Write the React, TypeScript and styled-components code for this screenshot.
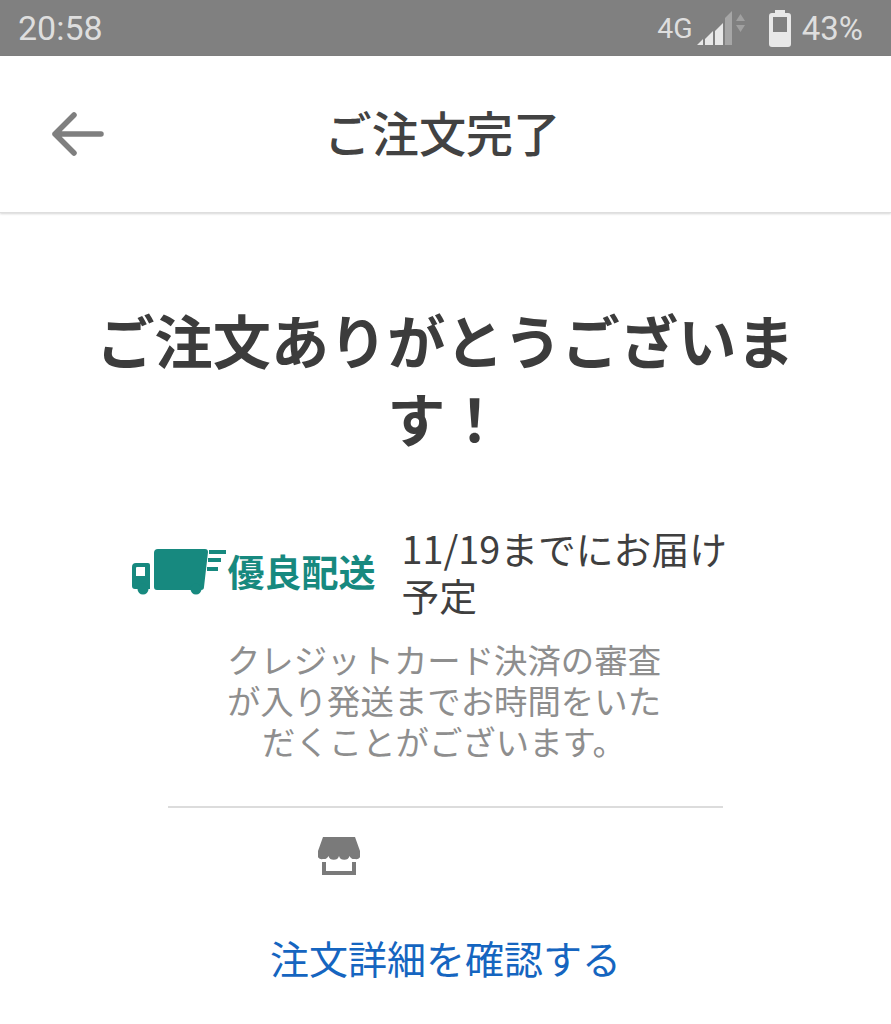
import styled, { createGlobalStyle } from 'styled-components';

const GlobalStyle = createGlobalStyle`
  html, body {
    margin: 0;
    padding: 0;
    background: #fff;
  }
  body {
    font-family: Roboto, "Noto Sans CJK JP", sans-serif;
    -webkit-font-smoothing: antialiased;
  }
`;

const JP = `"Noto Sans CJK JP", sans-serif`;

const Page = styled.div`
  width: 891px;
  height: 1024px;
  overflow: hidden;
  background: #fff;
`;

const StatusBar = styled.div`
  height: 56px;
  background: #808080;
  color: #dedede;
  display: flex;
  align-items: center;
  justify-content: space-between;
  padding: 0 28px 0 18px;
  box-sizing: border-box;
`;

const Clock = styled.span`
  font-size: 34px;
  font-weight: 400;
`;

const StatusRight = styled.div`
  display: flex;
  align-items: center;
`;

const NetworkLabel = styled.span`
  font-size: 28.5px;
  margin-right: 4px;
`;

const BatteryWrap = styled.span`
  display: flex;
  margin-left: 22px;
`;

const BatteryLabel = styled.span`
  margin-left: 11px;
  font-size: 33px;
`;

const Header = styled.header`
  height: 157px;
  box-sizing: border-box;
  display: flex;
  align-items: center;
  position: relative;
  justify-content: center;
  border-bottom: 1px solid #dedede;
  box-shadow: 0 1px 2px rgba(0, 0, 0, 0.16);
`;

const BackButton = styled.button`
  position: absolute;
  left: 50px;
  top: 50px;
  width: 56px;
  height: 56px;
  padding: 0;
  border: 0;
  background: none;
`;

const Title = styled.h1`
  margin: 0 6px 4px 0;
  font: 500 47.200px/60px ${JP};
  color: #424242;
`;

const Main = styled.main`
  display: flex;
  flex-direction: column;
  align-items: center;
`;

const Thanks = styled.h2`
  width: 700px;
  margin: 87px 0 0;
  text-align: center;
  font: 700 58.2px/78px ${JP};
  color: #3c3c3c;
`;

const DeliveryRow = styled.div`
  margin-top: 68px;
  width: 630px;
  display: flex;
  align-items: center;
`;

const Badge = styled.div`
  display: flex;
  align-items: center;
  flex: none;
  margin-right: 26px;
`;

const BadgeText = styled.span`
  font: 700 37px/48px ${JP};
  color: #17897f;
  margin-left: 1px;
`;

const DeliveryDate = styled.p`
  margin: 0;
  width: 345px;
  font: 400 37.800px/47px ${JP};
  color: #3f3f3f;
`;

const Notice = styled.p`
  width: 440px;
  margin: 20px 3px 0 0;
  text-align: center;
  font: 400 33.4px/41px ${JP};
  color: #8e8e8e;
`;

const Divider = styled.hr`
  width: 555px;
  height: 2px;
  margin: 45px 0 0;
  border: 0;
  background: #dcdcdc;
`;

const StoreRow = styled.div`
  width: 555px;
  margin-top: 29px;
  padding-left: 150px;
  box-sizing: border-box;
  line-height: 0;
`;

const DetailLink = styled.a`
  margin-top: 52px;
  font: 400 39px/56px ${JP};
  color: #1565c0;
  text-decoration: none;
`;

const SignalIcon = () => (
  <svg width="50" height="36" viewBox="0 0 50 36">
    <path d="M0 35h6v-6zM8 35h8V21l-8 8zM18 35h8V13l-8 8z" fill="#e8e8e8" />
    <path d="M28 35h7V1l-7 7z" fill="#a6a6a6" />
    <path d="M39 11l4.500-7 4.500 7zM39 15h9l-4.500 7z" fill="#a0a0a0" />
  </svg>
);

const BatteryIcon = () => (
  <svg width="22" height="37" viewBox="0 0 22 37">
    <path
      fillRule="evenodd"
      d="M6 0h10v3h3a3 3 0 0 1 3 3v28a3 3 0 0 1-3 3H3a3 3 0 0 1-3-3V6a3 3 0 0 1 3-3h3zM4 7v15h14V7z"
      fill="#e8e8e8"
    />
  </svg>
);

const BackIcon = () => (
  <svg width="56" height="56" viewBox="0 0 56 56" fill="none" stroke="#7f7f7f" strokeWidth="5.500" strokeLinecap="round" strokeLinejoin="round">
    <path d="M5 28h46M24 9L5 28l19 19" />
  </svg>
);

const TruckIcon = () => (
  <svg width="96" height="48" viewBox="0 0 96 48" fill="#17897f">
    <path d="M5 16h12a2 2 0 0 1 2 2v24H4a3 3 0 0 1-3-3V20a4 4 0 0 1 4-4zm1 4a1 1 0 0 0-1 1v8h9v-9z" fillRule="evenodd" />
    <circle cx="12" cy="42" r="5.500" />
    <path d="M27 2h47a3 3 0 0 1 3 3l-4 35a3 3 0 0 1-3 3H26a3 3 0 0 1-3-3V6a4 4 0 0 1 4-4z" />
    <circle cx="65" cy="42" r="5.500" />
    <path d="M78 3h17v4H78zM77 11h13v4H77zM76 20h11v4H76z" />
  </svg>
);

const StoreIcon = () => (
  <svg width="42" height="40" viewBox="0 0 42 40" fill="#7a7a7a">
    <path d="M5 0h32l5 14a5 5 0 0 1-5 8 5.200 5.200 0 0 1-5.500-3 5.500 5.500 0 0 1-10.500 0 5.500 5.500 0 0 1-10.500 0A5.200 5.200 0 0 1 5 22a5 5 0 0 1-5-8z" />
    <path d="M4 25h4v9h26v-9h4v13H4z" />
  </svg>
);

export default function App() {
  return (
    <Page>
      <GlobalStyle />
      <StatusBar>
        <Clock>20:58</Clock>
        <StatusRight>
          <NetworkLabel>4G</NetworkLabel>
          <SignalIcon />
          <BatteryWrap>
            <BatteryIcon />
          </BatteryWrap>
          <BatteryLabel>43%</BatteryLabel>
        </StatusRight>
      </StatusBar>
      <Header>
        <BackButton aria-label="戻る">
          <BackIcon />
        </BackButton>
        <Title>ご注文完了</Title>
      </Header>
      <Main>
        <Thanks>ご注文ありがとうございます！</Thanks>
        <DeliveryRow>
          <Badge>
            <TruckIcon />
            <BadgeText>優良配送</BadgeText>
          </Badge>
          <DeliveryDate>11/19までにお届け予定</DeliveryDate>
        </DeliveryRow>
        <Notice>クレジットカード決済の審査が入り発送までお時間をいただくことがございます。</Notice>
        <Divider />
        <StoreRow>
          <StoreIcon />
        </StoreRow>
        <DetailLink href="#">注文詳細を確認する</DetailLink>
      </Main>
    </Page>
  );
}
